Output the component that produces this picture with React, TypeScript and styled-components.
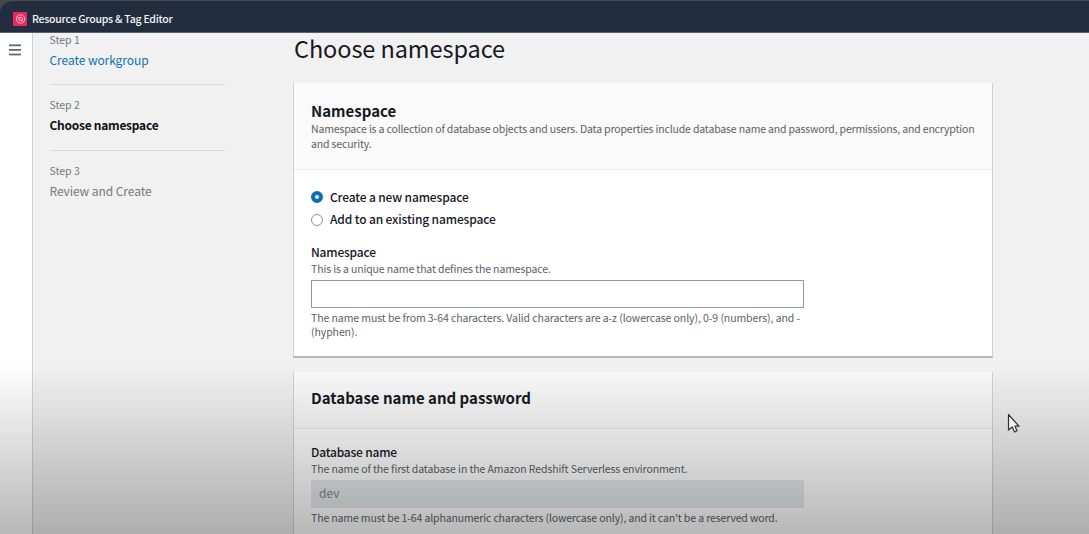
import React from "react";
import styled, { createGlobalStyle } from "styled-components";

const Global = createGlobalStyle`
  * { box-sizing: border-box; }
  html, body { margin: 0; padding: 0; overflow: hidden; }
  body { font-family: "Noto Sans CJK SC", "Noto Sans", sans-serif; color: #16191f; }
  h1, h2, p { margin: 0; }
`;

const Page = styled.div`
  position: relative;
  width: 1089px;
  height: 534px;
  overflow: hidden;
  display: flex;
  flex-direction: column;
  background: #454646;
`;

const TopBar = styled.header`
  flex: 0 0 33px;
  display: flex;
  align-items: center;
  gap: 5px;
  padding: 5px 0 0 13px;
  border-top: 1px solid #4a4c4c;
  border-bottom: 1px solid #59616b;
  border-top-left-radius: 13px;
  background: #222e3f;
  color: #f4f5f6;
`;

const ServiceName = styled.span`
  margin-top: -2px;
  font-size: 10.5px;
  font-weight: 500;
  line-height: 15px;
  letter-spacing: -0.24px;
  white-space: nowrap;
`;

const Body = styled.div`
  flex: 1;
  min-height: 0;
  display: flex;
  background: #f1f1f1;
`;

const Rail = styled.div`
  flex: 0 0 33px;
  display: flex;
  justify-content: center;
  padding: 11px 3px 0 0;
  background: #fff;
  border-right: 1px solid #cfd0d0;
`;

const Steps = styled.nav`
  flex: 0 0 260px;
  padding-left: 16.5px;
`;

const Step = styled.div<{ $last?: boolean }>`
  width: 175px;
  height: 65.5px;
  border-bottom: ${(p) => (p.$last ? "none" : "1px solid #d9dada")};
  padding-top: 13px;
  &:first-child {
    height: 52px;
    padding-top: 0;
  }
`;

const StepNumber = styled.div`
  font-size: 10.5px;
  line-height: 14px;
  color: #75797c;
`;

const StepTitle = styled.div<{ $tone: string; $bold?: boolean }>`
  margin-top: 4px;
  font-size: 12px;
  line-height: 17px;
  font-weight: ${(p) => (p.$bold ? 700 : 400)};
  letter-spacing: ${(p) => (p.$bold ? "-0.26px" : "-0.07px")};
  color: ${(p) => p.$tone};
  white-space: nowrap;
`;

const Main = styled.main`
  flex: 0 0 700px;
`;

const Title = styled.h1`
  padding-left: 1px;
  height: 50px;
  font-size: 23.5px;
  line-height: 30px;
  font-weight: 400;
  letter-spacing: -0.08px;
`;

const Card = styled.section`
  width: 700px;
  margin-bottom: 14px;
  background: #fff;
  border: solid #cfd0d0;
  border-width: 0 1px;
  border-bottom: 2px solid #b5b7b7;
`;

const CardHeader = styled.div<{ $height: number; $pad: number }>`
  height: ${(p) => p.$height}px;
  padding: ${(p) => p.$pad}px 0 0 17px;
  background: #fafafa;
  border-bottom: 1px solid #ebebeb;
`;

const CardTitle = styled.h2`
  font-size: 15px;
  line-height: 22px;
  font-weight: 700;
`;

const CardBody = styled.div<{ $pad: number }>`
  height: 186px;
  padding: ${(p) => p.$pad}px 0 0 17px;
`;

const Hint = styled.p<{ $track?: number }>`
  font-size: 10.5px;
  line-height: 14.5px;
  letter-spacing: ${(p) => p.$track ?? -0.13}px;
  color: #5d6164;
  white-space: nowrap;
`;

const Options = styled.div`
  margin-bottom: 12px;
`;

const Option = styled.label`
  display: flex;
  align-items: center;
  gap: 7px;
  height: 22.5px;
  font-size: 12px;
  font-weight: 500;
  letter-spacing: -0.14px;
`;

const OptionText = styled.span`
  padding-bottom: 2px;
`;

const Radio = styled.span<{ $on?: boolean }>`
  width: 12px;
  height: 12px;
  border-radius: 50%;
  background: #fff;
  border: ${(p) => (p.$on ? "4px solid #0c6fb5" : "1px solid #8d9393")};
`;

const Label = styled.div`
  font-size: 12px;
  height: 19px;
  line-height: 18px;
  font-weight: 500;
  letter-spacing: -0.2px;
`;

const Field = styled.div<{ $disabled?: boolean }>`
  width: 493px;
  height: 28px;
  margin: 3px 0;
  padding: 0 8px;
  font-size: 12px;
  line-height: 25px;
  color: #83898a;
  background: ${(p) => (p.$disabled ? "#e6eaea" : "#fff")};
  border: ${(p) => (p.$disabled ? "0" : "1px solid #929797")};
`;

const Shade = styled.div`
  position: absolute;
  inset: 364px 0 0 0;
  background: linear-gradient(rgba(0, 0, 0, 0), rgba(0, 0, 0, 0.28));
  pointer-events: none;
`;

const Pointer = styled.svg`
  position: absolute;
  left: 1006px;
  top: 412px;
`;

export default function App() {
  return (
    <Page>
      <Global />
      <TopBar>
        <svg width="14" height="14" viewBox="0 0 14 14" fill="none" stroke="#ffc3d5">
          <rect width="14" height="14" fill="#e8285f" stroke="none" />
          <circle cx="7.5" cy="7" r="4.1" strokeWidth="0.9" />
          <circle cx="7.5" cy="7" r="1.9" strokeWidth="0.9" />
          <path d="M7.5 7 10.6 9.9M4 4.6 7.5 7" strokeWidth="0.7" />
        </svg>
        <ServiceName>Resource Groups &amp; Tag Editor</ServiceName>
      </TopBar>
      <Body>
        <Rail>
          <svg width="12" height="12" viewBox="0 0 12 12" fill="#66696c">
            <rect width="12" height="1.8" y="0.4" />
            <rect width="12" height="1.8" y="5" />
            <rect width="12" height="1.8" y="9.6" />
          </svg>
        </Rail>
        <Steps>
          <Step>
            <StepNumber>Step 1</StepNumber>
            <StepTitle $tone="#0e73b3">Create workgroup</StepTitle>
          </Step>
          <Step>
            <StepNumber>Step 2</StepNumber>
            <StepTitle $tone="#0f1114" $bold>Choose namespace</StepTitle>
          </Step>
          <Step $last>
            <StepNumber>Step 3</StepNumber>
            <StepTitle $tone="#75797c">Review and Create</StepTitle>
          </Step>
        </Steps>
        <Main>
          <Title>Choose namespace</Title>
          <Card>
            <CardHeader $height={87} $pad={17}>
              <CardTitle>Namespace</CardTitle>
              <Hint $track={-0.16}>
                Namespace is a collection of database objects and users. Data properties include database name and password, permissions, and encryption
                <br />
                and security.
              </Hint>
            </CardHeader>
            <CardBody $pad={16}>
              <Options>
                <Option><Radio $on /><OptionText>Create a new namespace</OptionText></Option>
                <Option><Radio /><OptionText>Add to an existing namespace</OptionText></Option>
              </Options>
              <Label>Namespace</Label>
              <Hint>This is a unique name that defines the namespace.</Hint>
              <Field />
              <Hint $track={-0.08}>
                The name must be from 3-64 characters. Valid characters are a-z (lowercase only), 0-9 (numbers), and -
                <br />
                (hyphen).
              </Hint>
            </CardBody>
          </Card>
          <Card>
            <CardHeader $height={57} $pad={15}>
              <CardTitle>Database name and password</CardTitle>
            </CardHeader>
            <CardBody $pad={14}>
              <Label>Database name</Label>
              <Hint $track={-0.1}>The name of the first database in the Amazon Redshift Serverless environment.</Hint>
              <Field $disabled>dev</Field>
              <Hint>The name must be 1-64 alphanumeric characters (lowercase only), and it can't be a reserved word.</Hint>
            </CardBody>
          </Card>
        </Main>
      </Body>
      <Shade />
      <Pointer width="14" height="23" viewBox="0 0 14 23" fill="#f2f2f2" stroke="#2f3032" strokeWidth="1.2" strokeLinejoin="round">
        <path d="M2.5 2.5V18L6.2 15 8.6 20 11 18.8 9 14.2H13Z" />
      </Pointer>
    </Page>
  );
}
